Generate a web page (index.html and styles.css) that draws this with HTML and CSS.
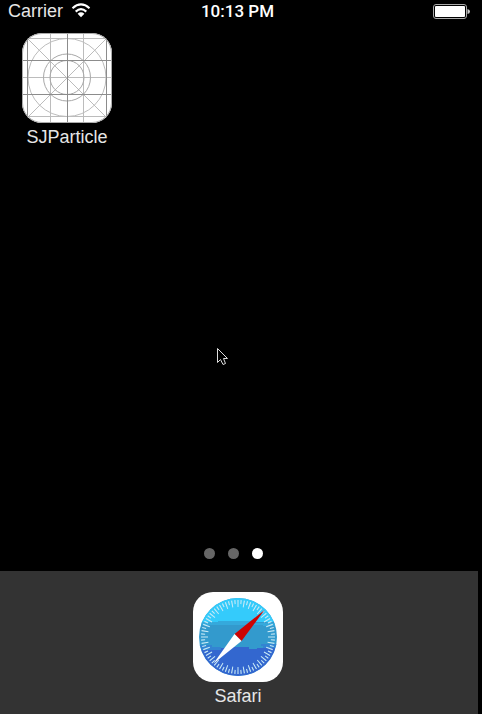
FILE: index.html
```html
<!DOCTYPE html>
<html lang="en">
<head>
<meta charset="utf-8">
<meta name="viewport" content="width=device-width, initial-scale=1">
<title>Home Screen</title>
<link rel="stylesheet" href="styles.css">
</head>
<body>
<div class="screen">
  <header class="status">
    <div class="status-left">
      <span>Carrier</span>
      <svg class="wifi" viewBox="0 0 20 16" aria-hidden="true">
        <path d="M1.5 5.2Q10-2.3 18.5 5.2M4.7 8.6Q10 3.8 15.3 8.6" fill="none" stroke="#fff" stroke-width="2.1"/>
        <path d="M6.6 10.7Q10 7.8 13.4 10.7L10 14.3Z" fill="#fff"/>
      </svg>
    </div>
    <time class="clock">10:13 PM</time>
    <div class="status-right">
      <svg class="battery" viewBox="0 0 38 16" aria-hidden="true">
        <rect x="1.5" y="1.5" width="33" height="14" rx="2.5" fill="none" stroke="#aaa"/>
        <rect x="3" y="3" width="30" height="11" rx="1" fill="#fff"/>
        <path d="M35.5 6Q38 6.5 38 8.5T35.5 11Z" fill="#ccc"/>
      </svg>
    </div>
  </header>

  <main class="apps">
    <a class="app" href="#">
      <svg class="app-icon" viewBox="0 0 90 90" aria-hidden="true">
        <defs><clipPath id="tile"><rect width="90" height="90" rx="20"/></clipPath></defs>
        <g clip-path="url(#tile)">
          <rect width="90" height="90" fill="#fff"/>
          <g fill="none" stroke="#bcbcbc">
            <path d="M28.5 0V90M61.5 0V90M0 5.5H90M0 44.5H90M0 83.5H90"/>
            <path d="M0 0L90 90M90 0L0 90"/>
            <circle cx="45" cy="44.5" r="39"/>
            <circle cx="45" cy="44.5" r="23.5" stroke="#a8a8a8"/>
            <circle cx="45" cy="44.5" r="17" stroke="#a8a8a8"/>
            <path d="M0 27.5H90M0 61.5H90M5.5 0V90M45.5 0V90M84.5 0V90" stroke="#8c8c8c"/>
          </g>
        </g>
        <rect x="0.5" y="0.5" width="89" height="89" rx="19.5" fill="none" stroke="#aaa"/>
      </svg>
      <span class="app-name">SJParticle</span>
    </a>
  </main>

  <nav class="pages" aria-label="Pages">
    <button class="dot" type="button" aria-label="Page 1"></button>
    <button class="dot" type="button" aria-label="Page 2"></button>
    <button class="dot current" type="button" aria-label="Page 3" aria-current="page"></button>
  </nav>

  <footer class="dock">
    <a class="app" href="#">
      <svg class="app-icon" viewBox="0 0 90 90" aria-hidden="true">
        <defs><clipPath id="dial"><circle cx="45" cy="45" r="39"/></clipPath></defs>
        <rect width="90" height="90" rx="20" fill="#fff"/>
        <g clip-path="url(#dial)">
          <rect width="90" height="90" fill="#339acd"/>
          <rect width="90" height="30" fill="#34cbfb"/>
          <path d="M0 30H25V29H62V31H90V34H70V33H0Z" fill="#35a9dc"/>
          <path d="M0 58H20V56H35V55H56V57H64V56H90V90H0Z" fill="#3367cf"/>
          <path d="M0 53H19V55H28V58H0ZM68 52H90V56H70V54H68Z" fill="#3384d2"/>
        </g>
        <g fill="none" stroke="#c9eaf6">
          <circle cx="45" cy="45" r="33.5" stroke-width="7" pathLength="360" stroke-dasharray="1.8 8.2" stroke-dashoffset="0.9"/>
          <circle cx="45" cy="45" r="35" stroke-width="4" pathLength="360" stroke-dasharray="1.8 8.2" stroke-dashoffset="5.9"/>
        </g>
        <path d="M71.5 18L41.5 42L48.5 49Z" fill="#cd0303"/>
        <path d="M20.5 71.5L41.5 42L48.5 49Z" fill="#fff"/>
      </svg>
      <span class="app-name">Safari</span>
    </a>
  </footer>
</div>
<svg class="cursor" viewBox="0 0 12 19" aria-hidden="true">
  <path d="M1.5 1.5V15.5L4.5 12.5L7 17.5L9.5 16.5L7.5 11.5H11.5Z" fill="#000" stroke="#ddd"/>
</svg>
</body>
</html>
```
FILE: styles.css
```css
* {
  box-sizing: border-box;
}

body {
  margin: 0;
  background: #000;
  color: #e6e6e6;
  font-family: "Liberation Sans", Arial, sans-serif;
  font-size: 18px;
  line-height: 22px;
}

.screen {
  display: flex;
  flex-direction: column;
  min-height: 100vh;
  padding-right: 4px;
}

.status {
  display: grid;
  grid-template-columns: 1fr auto 1fr;
  align-items: center;
  height: 22px;
  padding: 0 8px;
}

.status-left {
  display: flex;
  align-items: center;
  gap: 8px;
}

.wifi {
  width: 20px;
  height: 16px;
}

.clock {
  padding-right: 3px;
  color: #fff;
  font-family: Roboto, "Liberation Sans", sans-serif;
  font-size: 17px;
  font-weight: 500;
}

.status-right {
  display: flex;
  justify-content: flex-end;
}

.battery {
  width: 38px;
  height: 16px;
}

.apps {
  display: grid;
  grid-template-columns: repeat(4, 90px);
  justify-content: space-between;
  padding: 11px 22px;
}

.app {
  display: flex;
  flex-direction: column;
  align-items: center;
  gap: 3px;
  color: inherit;
  text-decoration: none;
}

.app-icon {
  width: 90px;
  height: 90px;
}

.pages {
  display: flex;
  justify-content: center;
  gap: 13px;
  margin-top: auto;
  padding: 0 12px 12px 0;
}

.dot {
  width: 11px;
  height: 11px;
  padding: 0;
  border: 0;
  border-radius: 50%;
  background: #666;
}

.dot.current {
  background: #fff;
}

.dock {
  display: flex;
  justify-content: center;
  padding: 21px 2px 7px 0;
  background: #333;
}

.cursor {
  position: absolute;
  top: 347px;
  left: 216px;
  width: 12px;
  height: 19px;
}
```
